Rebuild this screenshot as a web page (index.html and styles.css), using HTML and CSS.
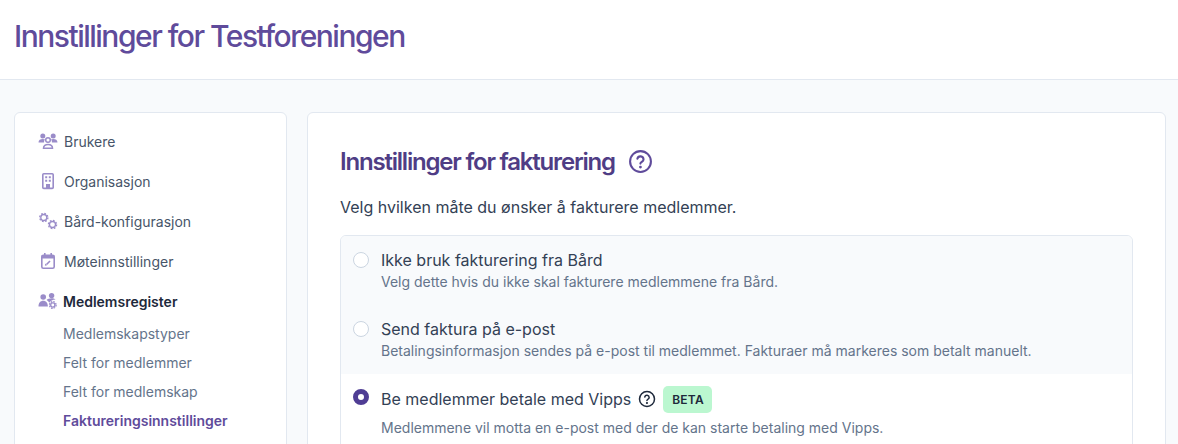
FILE: index.html
```html
<!DOCTYPE html>
<html lang="nb">
<head>
  <meta charset="UTF-8">
  <meta name="viewport" content="width=device-width, initial-scale=1.0">
  <title>Innstillinger for Testforeningen</title>
  <link rel="stylesheet" href="styles.css">
</head>
<body>
  <header class="top">
    <h1>Innstillinger for Testforeningen</h1>
  </header>

  <div class="layout">
    <nav class="sidebar">
      <a class="nav-item">
        <svg class="nav-icon" viewBox="0 0 20 20"><circle cx="4.800" cy="5" r="2.500"/><circle cx="15.200" cy="5" r="2.500"/><path d="M.5 11.500c0-2.400 1.800-3.500 4.300-3.500 1 0 1.700.2 2.300.5-.8.700-1.100 1.800-1 3H.5zM19.500 11.500c0-2.400-1.800-3.500-4.300-3.500-1 0-1.700.2-2.300.5.800.7 1.100 1.800 1 3h5.600z"/><circle class="line" cx="10" cy="9" r="2.300" fill="none" stroke-width="1.500"/><path class="line" d="M5.500 17.300c0-2.700 2-3.900 4.500-3.900s4.500 1.200 4.500 3.900z" fill="none" stroke-width="1.500"/></svg>
        <span>Brukere</span>
      </a>
      <a class="nav-item">
        <svg class="nav-icon" viewBox="0 0 20 20"><rect class="line" x="4.800" y="2.800" width="10.400" height="14.600" rx="1" fill="none" stroke-width="1.600"/><path d="M7.200 5.200h2v2h-2zM10.800 5.200h2v2h-2zM7.200 8.800h2v2h-2zM10.800 8.800h2v2h-2zM8 13h4v4H8z"/></svg>
        <span>Organisasjon</span>
      </a>
      <a class="nav-item">
        <svg class="nav-icon" viewBox="0 0 20 20"><circle class="line" cx="5.800" cy="6.500" r="3" fill="none" stroke-width="1.300"/><circle class="line" cx="5.800" cy="6.500" r="4.100" fill="none" stroke-width="1.300" stroke-dasharray="1.700 1.520"/><circle class="line" cx="14.500" cy="13.500" r="3" fill="none" stroke-width="1.300"/><circle class="line" cx="14.500" cy="13.500" r="4.100" fill="none" stroke-width="1.300" stroke-dasharray="1.700 1.520"/></svg>
        <span>Bård-konfigurasjon</span>
      </a>
      <a class="nav-item">
        <svg class="nav-icon" viewBox="0 0 20 20"><rect class="line" x="3.800" y="4.300" width="12.400" height="13" rx="1.500" fill="none" stroke-width="1.600"/><path d="M3.800 4.300h12.400v3.200H3.800zM6 2h1.600v3.500H6zM12.400 2H14v3.500h-1.600z"/><path class="line" d="M8.500 13.500l3.500-3.500" fill="none" stroke-width="1.600"/><path d="M7.300 12.500l1.800 1.800-2.200.4z"/></svg>
        <span>Møteinnstillinger</span>
      </a>
      <a class="nav-item nav-current">
        <svg class="nav-icon" viewBox="0 0 20 20"><circle cx="5.200" cy="6" r="2.800"/><circle cx="13.600" cy="4.600" r="2.700"/><path d="M.5 15.500c0-3.700 2-5.800 4.700-5.800s4.700 2.100 4.700 5.800zM8.600 9c.9-1 2.800-1.800 5-1.800 1.700 0 3 .4 4 1.200-3 .1-5.200 1.300-6.400 3.300-.5-1-1.400-2-2.600-2.700z"/><circle class="line" cx="14.800" cy="14" r="2.100" fill="none" stroke-width="1.300"/><circle class="line" cx="14.800" cy="14" r="3.300" fill="none" stroke-width="1.300" stroke-dasharray="1.600 1"/></svg>
        <span>Medlemsregister</span>
      </a>
      <ul class="subnav">
        <li>Medlemskapstyper</li>
        <li>Felt for medlemmer</li>
        <li>Felt for medlemskap</li>
        <li class="subnav-current">Faktureringsinnstillinger</li>
      </ul>
    </nav>

    <main class="card">
      <div class="card-title">
        <h2>Innstillinger for fakturering</h2>
        <svg class="help-large" viewBox="0 0 24 24"><circle cx="12" cy="12" r="10"/><path d="M9 9.300a3 3 0 0 1 5.900.7c0 2-3 2.500-3 4"/><path d="M11.900 17.300h.1" stroke-width="2.600"/></svg>
      </div>
      <p class="lead">Velg hvilken måte du ønsker å fakturere medlemmer.</p>

      <div class="options">
        <div class="option">
          <span class="radio"></span>
          <div>
            <div class="option-label">Ikke bruk fakturering fra Bård</div>
            <div class="option-text">Velg dette hvis du ikke skal fakturere medlemmene fra Bård.</div>
          </div>
        </div>
        <div class="option">
          <span class="radio"></span>
          <div>
            <div class="option-label">Send faktura på e-post</div>
            <div class="option-text">Betalingsinformasjon sendes på e-post til medlemmet. Fakturaer må markeres som betalt manuelt.</div>
          </div>
        </div>
        <div class="option option-selected">
          <span class="radio radio-on"></span>
          <div>
            <div class="option-label">
              Be medlemmer betale med Vipps
              <svg class="help-small" viewBox="0 0 24 24"><circle cx="12" cy="12" r="10"/><path d="M9 9.300a3 3 0 0 1 5.900.7c0 2-3 2.500-3 4"/><path d="M11.900 17.300h.1" stroke-width="2.800"/></svg>
              <span class="badge">BETA</span>
            </div>
            <div class="option-text">Medlemmene vil motta en e-post med der de kan starte betaling med Vipps.</div>
          </div>
        </div>
      </div>
    </main>
  </div>
</body>
</html>
```

FILE: styles.css
```css
html, body {
  height: 100%;
}
body {
  margin: 0;
  overflow: hidden;
  font-family: Inter, "Liberation Sans", sans-serif;
  background-color: #f8fafc;
  color: #1e293b;
}
.top {
  height: 79px;
  padding-left: 14px;
  display: flex;
  align-items: center;
  background-color: #fff;
  border-bottom: 1px solid #e2e8f0;
}
h1 {
  margin: 0 0 8px;
  font-size: 30px;
  font-weight: 500;
  letter-spacing: -1.5px;
  color: #5f4b9b;
}
.layout {
  display: flex;
  align-items: flex-start;
  gap: 20px;
  padding: 32px 12px 0 14px;
}
.sidebar {
  flex: 0 0 273px;
  box-sizing: border-box;
  height: 400px;
  padding: 8px 0 0 23px;
  background-color: #fff;
  border: 1px solid #e2e8f0;
  border-radius: 6px;
}
.nav-item {
  display: flex;
  align-items: center;
  height: 40px;
  font-size: 14px;
  color: #475569;
}
.nav-icon {
  width: 20px;
  height: 20px;
  margin-right: 6px;
  fill: #9a8cc9;
  stroke: none;
}
.nav-icon .line {
  stroke: #9a8cc9;
}
.nav-current {
  font-weight: 600;
  color: #1e293b;
}
.nav-current .nav-icon {
  margin-right: 5px;
}
.subnav {
  list-style: none;
  margin: -2px 0 0;
  padding: 0 0 0 25px;
  font-size: 14px;
  color: #64748b;
}
.subnav li {
  height: 29px;
  line-height: 29px;
}
.subnav-current {
  font-weight: 600;
  color: #5f4b9b;
}
.card {
  flex: 1;
  box-sizing: border-box;
  height: 500px;
  padding: 30px 32px 0;
  background-color: #fff;
  border: 1px solid #e2e8f0;
  border-radius: 6px;
}
.card-title {
  display: flex;
  align-items: center;
  gap: 13px;
  height: 36px;
}
h2 {
  margin: 0;
  font-size: 24px;
  font-weight: 600;
  letter-spacing: -1.2px;
  color: #4f3d85;
}
.help-large {
  width: 25px;
  height: 25px;
  fill: none;
  stroke: #5f4b9b;
  stroke-width: 2;
  stroke-linecap: round;
}
.lead {
  margin: 16px 0 16px;
  font-size: 16px;
  line-height: 24px;
  color: #334155;
}
.options {
  background-color: #fff;
  border: 1px solid #e2e8f0;
  border-radius: 6px;
  overflow: hidden;
}
.option {
  display: flex;
  gap: 12px;
  height: 69px;
  box-sizing: border-box;
  padding: 12px 12px 0;
  background-color: #f8fafc;
}
.option-selected {
  height: 100px;
  padding-top: 11px;
  background-color: #fff;
}
.radio {
  flex: none;
  box-sizing: border-box;
  width: 16px;
  height: 16px;
  margin-top: 4px;
  background-color: #fff;
  border: 1px solid #cbd5e1;
  border-radius: 50%;
}
.radio-on {
  background-color: #fff;
  border: 5px solid #4f3d94;
}
.option-label {
  display: flex;
  align-items: center;
  height: 24px;
  font-size: 16px;
  color: #334155;
}
.option-text {
  font-size: 14px;
  line-height: 20px;
  color: #64748b;
}
.option-selected .option-label {
  height: 28px;
  margin-bottom: 5px;
}
.help-small {
  width: 18px;
  height: 18px;
  margin: 0 7px 0 7px;
  fill: none;
  stroke: #1e293b;
  stroke-width: 2;
  stroke-linecap: round;
}
.badge {
  padding: 0 8px 0 9px;
  height: 27px;
  line-height: 27px;
  font-size: 12px;
  font-weight: 600;
  letter-spacing: .2px;
  color: #1e293b;
  background-color: #bbf7d0;
  border-radius: 5px;
}
```
